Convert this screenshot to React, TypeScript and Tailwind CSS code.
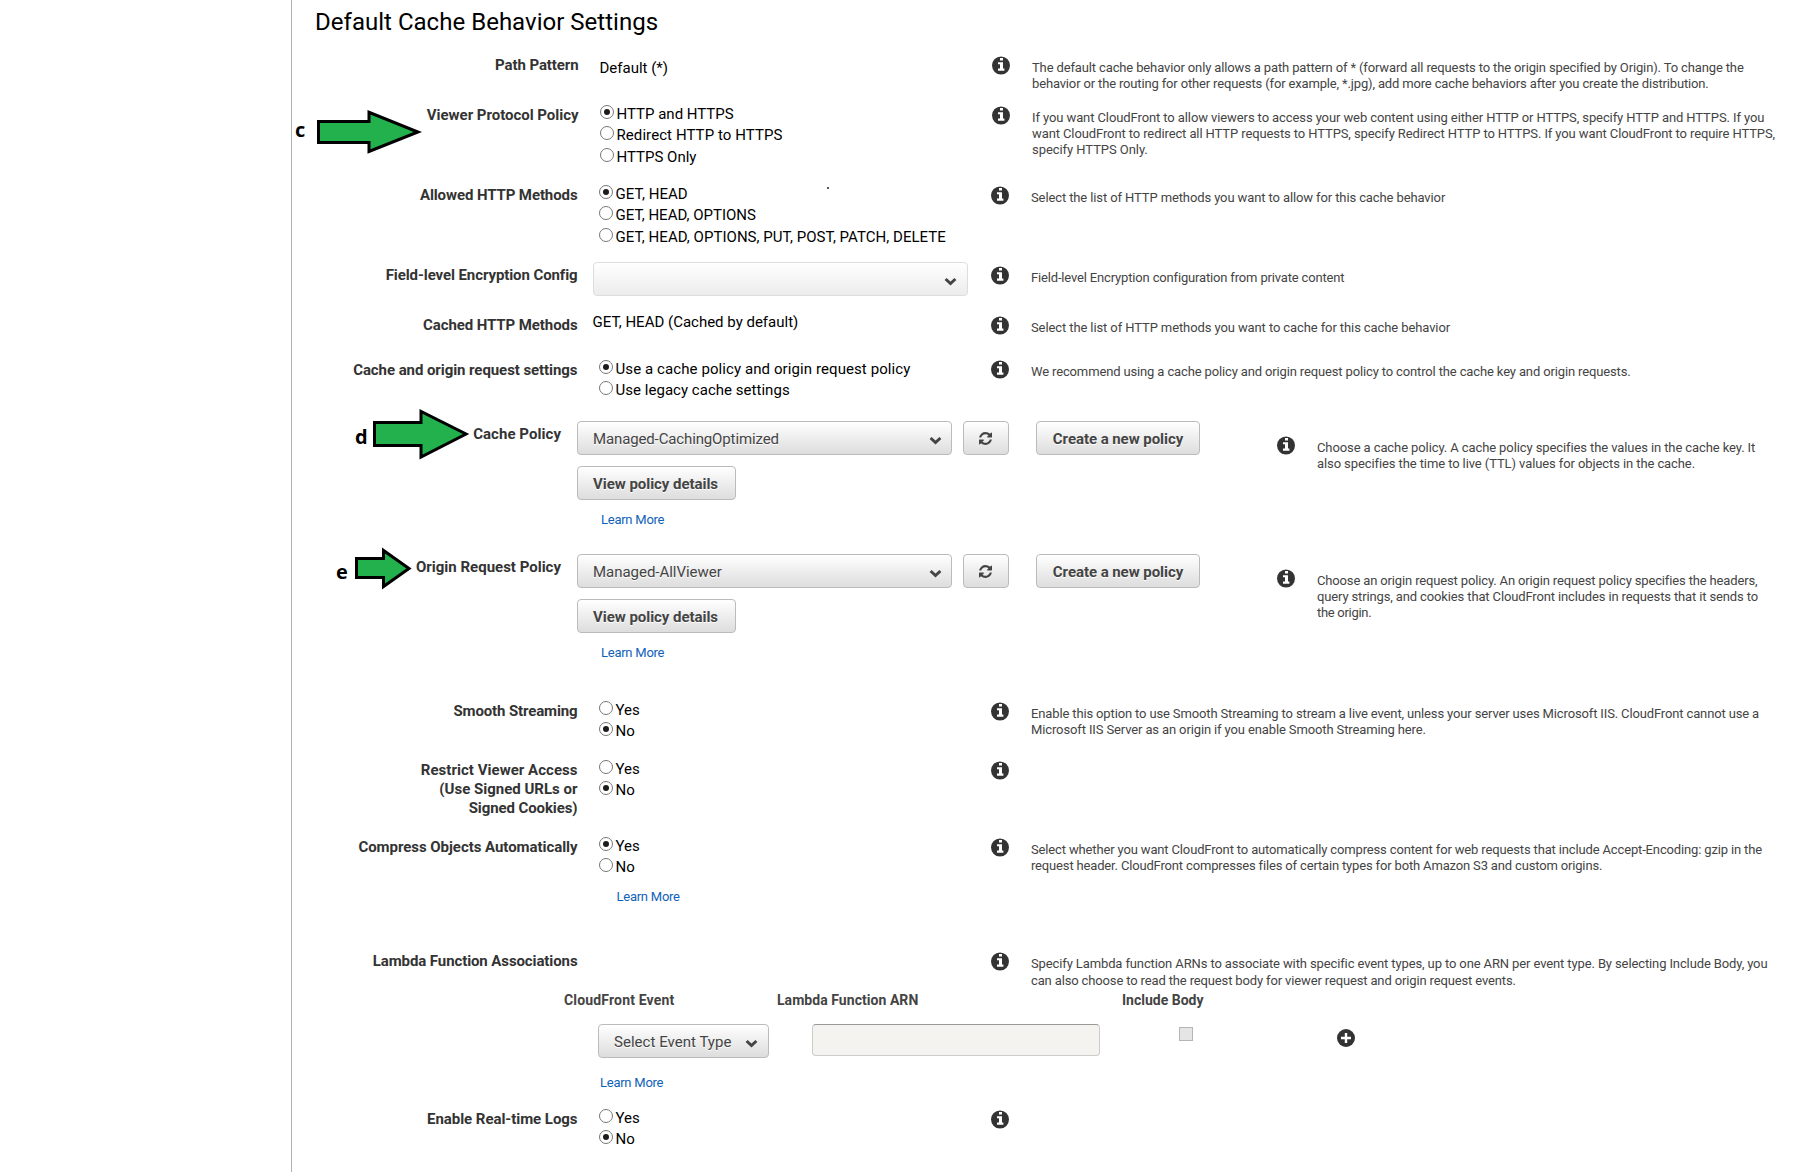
import React from "react";

type Line = { t: string; c: string };

function Info() {
  return (
    <svg className="block h-[19px] w-[18px]" viewBox="0 0 18 19">
      <ellipse cx="9" cy="9.5" rx="9" ry="9.1" fill="#333" />
      <path d="M8 2h3v2.6H8zM6 6.3h5v6.2h1.4v2.2H6v-2.2h2V8.3H6z" fill="#fff" />
    </svg>
  );
}

function Plus() {
  return (
    <svg className="block h-[18px] w-[18px]" viewBox="0 0 18 18">
      <circle cx="9" cy="9" r="9" fill="#333" />
      <path d="M4 9h10M9 4v10" stroke="#fff" strokeWidth="2.4" />
    </svg>
  );
}

function Chevron({ className = "" }: { className?: string }) {
  return (
    <svg className={"block h-[9px] w-[13px] shrink-0 " + className} viewBox="0 0 13 9">
      <path d="M1.6 2l4.9 4.5L11.4 2" fill="none" stroke="#444" strokeWidth="3" />
    </svg>
  );
}

function Refresh() {
  return (
    <svg className="mr-[2px] mb-[2px] block h-[13px] w-[13px]" viewBox="0 0 1536 1536" fill="#444">
      <path d="M1511 928q0 5-1 7-64 268-268 434.500t-478 166.500q-146 0-282.500-55t-243.500-157l-129 129q-19 19-45 19t-45-19-19-45v-448q0-26 19-45t45-19h448q26 0 45 19t19 45-19 45l-137 137q71 66 161 102t187 36q134 0 250-65t186-179q11-17 53-117 8-23 30-23h192q13 0 22.500 9.500t9.500 22.500zm25-800v448q0 26-19 45t-45 19h-448q-26 0-45-19t-19-45 19-45l138-138q-148-137-349-137-134 0-250 65t-186 179q-11 17-53 117-8 23-30 23h-199q-13 0-22.500-9.500t-9.500-22.500v-7q65-268 270-434.500t480-166.500q146 0 284 55.500t245 156.500l130-129q19-19 45-19t45 19 19 45z" />
    </svg>
  );
}

function Help({ lines, className = "leading-[16px]" }: { lines: Line[]; className?: string }) {
  return (
    <div className={"whitespace-nowrap text-[13px] text-[#444] " + className}>
      {lines.map((l) => (
        <div key={l.t} className={l.c}>{l.t}</div>
      ))}
    </div>
  );
}

function Row({
  label,
  height,
  shift = "",
  help = [],
  helpClass,
  infoClass = "",
  children,
}: {
  label: Line[];
  height: string;
  shift?: string;
  help?: Line[];
  helpClass?: string;
  infoClass?: string;
  children?: React.ReactNode;
}) {
  return (
    <div className={"flex " + height + " " + shift}>
      <div className="w-[285.500px] shrink-0 pt-px text-right text-[15px] leading-[19px] font-bold whitespace-nowrap text-[#333]">
        {label.map((l) => (
          <div key={l.t} className={l.c}>{l.t}</div>
        ))}
      </div>
      <div className="w-[413.500px] shrink-0">{children}</div>
      <div className={"flex " + infoClass}>
        <div className="w-[40px] shrink-0 pt-px"><Info /></div>
        <div className="pt-[5px]"><Help lines={help} className={helpClass} /></div>
      </div>
    </div>
  );
}

function Radios({ items, checked }: { items: Line[]; checked: number }) {
  return (
    <div className="-mt-px ml-[21.500px]">
      {items.map((l, i) => (
        <div key={l.t} className="flex h-[21.4px] items-start">
          <span className="mt-px flex h-[14px] w-[14px] items-center justify-center rounded-full border-[1.5px] border-[#777] bg-white">
            {i === checked && <span className="h-[6px] w-[6px] rounded-full bg-[#1c1c1c]" />}
          </span>
          <span className={"mt-px ml-[2.500px] text-[15px] leading-[19px] whitespace-nowrap " + l.c}>{l.t}</span>
        </div>
      ))}
    </div>
  );
}

const face =
  "flex h-[34px] items-center rounded-[4px] border border-[#bbb] bg-linear-to-b from-white to-[#ddd] pt-[2px] text-[15px] text-[#444] [text-shadow:0_1px_0_#fff] whitespace-nowrap ";

function PolicyRow({
  label,
  value,
  valueClass,
  height,
  help,
}: {
  label: Line;
  value: string;
  valueClass: string;
  height: string;
  help: Line[];
}) {
  return (
    <div className={"flex " + height}>
      <div className="w-[269px] shrink-0 pt-px text-right text-[15px] leading-[19px] font-bold whitespace-nowrap text-[#333]">
        <div className={label.c}>{label.t}</div>
      </div>
      <div className="-mt-[3px] ml-4 w-[700px] shrink-0">
        <div className="flex">
          <div className={face + "w-[375px] justify-between pr-[9.500px] pl-[15px]"}>
            <span className={valueClass}>{value}</span>
            <Chevron className="mt-[2px]" />
          </div>
          <div className={face + "ml-[11px] w-[46px] justify-center"}><Refresh /></div>
          <div className={face + "ml-[27px] w-[164px] justify-center font-bold tracking-[-0.06px]"}>Create a new policy</div>
        </div>
        <div className={face + "mt-[11px] w-[159px] pl-[15px] font-bold tracking-[-0.044px]"}>View policy details</div>
        <LearnMore className="mt-[12px] ml-[24px]" />
      </div>
      <div className="w-[40px] shrink-0 pt-[12px]"><Info /></div>
      <div className="pt-[16px]"><Help lines={help} /></div>
    </div>
  );
}

function LearnMore({ className = "" }: { className?: string }) {
  return <div className={"text-[13px] leading-4 tracking-[-0.25px] text-[#0f62b9] " + className}>Learn More</div>;
}

function Arrow({ letter, points, letterClass, className, w, h }: { letter: string; points: string; letterClass: string; className: string; w: number; h: number }) {
  return (
    <div className={"absolute flex " + className}>
      <span className={"font-['Open_Sans',sans-serif] text-[20px] leading-[28px] font-bold text-black " + letterClass}>{letter}</span>
      <svg width={w} height={h} viewBox={"0 0 " + w + " " + h} className="block shrink-0">
        <polygon points={points} fill="#22b14c" stroke="#000" strokeWidth="3" />
      </svg>
    </div>
  );
}

export default function App() {
  return (
    <div className="relative h-[1172px] w-[1800px] overflow-hidden bg-white font-[Roboto,sans-serif] text-black">
      <div className="ml-[291px] h-full border-l border-[#b0b0b0]">
        <h1 className="h-[55px] pt-[8px] pl-[23px] text-[24px] leading-[28px] tracking-[0.02px]">Default Cache Behavior Settings</h1>

        <Row
          label={[{ t: "Path Pattern", c: "tracking-[-0.1px]" }]}
          height="h-[50px]"
          shift="pl-px"
          help={[
            { t: "The default cache behavior only allows a path pattern of * (forward all requests to the origin specified by Origin). To change the", c: "tracking-[-0.135px]" },
            { t: "behavior or the routing for other requests (for example, *.jpg), add more cache behaviors after you create the distribution.", c: "tracking-[-0.153px]" },
          ]}
        >
          <div className="pt-[4px] pl-[21px] text-[15px] leading-[19px]">Default (*)</div>
        </Row>

        <Row
          label={[{ t: "Viewer Protocol Policy", c: "tracking-[-0.026px]" }]}
          height="h-[80px]"
          shift="pl-px"
          help={[
            { t: "If you want CloudFront to allow viewers to access your web content using either HTTP or HTTPS, specify HTTP and HTTPS. If you", c: "tracking-[-0.096px]" },
            { t: "want CloudFront to redirect all HTTP requests to HTTPS, specify Redirect HTTP to HTTPS. If you want CloudFront to require HTTPS,", c: "tracking-[-0.104px]" },
            { t: "specify HTTPS Only.", c: "tracking-[-0.058px]" },
          ]}
        >
          <Radios
            checked={0}
            items={[
              { t: "HTTP and HTTPS", c: "" },
              { t: "Redirect HTTP to HTTPS", c: "tracking-[0.08px]" },
              { t: "HTTPS Only", c: "" },
            ]}
          />
        </Row>

        <Row
          label={[{ t: "Allowed HTTP Methods", c: "tracking-[-0.1px]" }]}
          height="h-[80px]"
          help={[{ t: "Select the list of HTTP methods you want to allow for this cache behavior", c: "tracking-[-0.11px]" }]}
        >
          <Radios
            checked={0}
            items={[
              { t: "GET, HEAD", c: "tracking-[0.05px]" },
              { t: "GET, HEAD, OPTIONS", c: "" },
              { t: "GET, HEAD, OPTIONS, PUT, POST, PATCH, DELETE", c: "tracking-[0.035px]" },
            ]}
          />
        </Row>

        <Row
          label={[{ t: "Field-level Encryption Config", c: "tracking-[-0.09px]" }]}
          height="h-[50px]"
          help={[{ t: "Field-level Encryption configuration from private content", c: "tracking-[-0.162px]" }]}
        >
          <div className="-mt-[3px] ml-[15px] flex h-[34px] w-[375px] items-center justify-end rounded-[4px] border border-[#ddd] bg-linear-to-b from-white to-[#ececec] pr-[9.500px]">
            <Chevron className="mt-[4px]" />
          </div>
        </Row>

        <Row
          label={[{ t: "Cached HTTP Methods", c: "tracking-[-0.09px]" }]}
          height="h-[45px]"
          help={[{ t: "Select the list of HTTP methods you want to cache for this cache behavior", c: "tracking-[-0.101px]" }]}
        >
          <div className="-mt-[2px] pl-[15px] text-[15px] leading-[19px]">GET, HEAD (Cached by default)</div>
        </Row>

        <Row
          label={[{ t: "Cache and origin request settings", c: "tracking-[-0.07px]" }]}
          height="h-[64px]"
          infoClass="-mt-px"
          help={[{ t: "We recommend using a cache policy and origin request policy to control the cache key and origin requests.", c: "tracking-[-0.140px]" }]}
        >
          <Radios
            checked={0}
            items={[
              { t: "Use a cache policy and origin request policy", c: "tracking-[0.09px]" },
              { t: "Use legacy cache settings", c: "tracking-[0.03px]" },
            ]}
          />
        </Row>

        <PolicyRow
          label={{ t: "Cache Policy", c: "tracking-[0.05px]" }}
          value="Managed-CachingOptimized"
          valueClass="tracking-[-0.13px]"
          height="h-[133px]"
          help={[
            { t: "Choose a cache policy. A cache policy specifies the values in the cache key. It", c: "tracking-[-0.098px]" },
            { t: "also specifies the time to live (TTL) values for objects in the cache.", c: "tracking-[-0.095px]" },
          ]}
        />
        <PolicyRow
          label={{ t: "Origin Request Policy", c: "" }}
          value="Managed-AllViewer"
          valueClass="tracking-[-0.03px]"
          height="h-[144px]"
          help={[
            { t: "Choose an origin request policy. An origin request policy specifies the headers,", c: "tracking-[-0.145px]" },
            { t: "query strings, and cookies that CloudFront includes in requests that it sends to", c: "tracking-[-0.133px]" },
            { t: "the origin.", c: "tracking-[-0.3px]" },
          ]}
        />

        <Row
          label={[{ t: "Smooth Streaming", c: "tracking-[-0.13px]" }]}
          height="h-[59px]"
          help={[
            { t: "Enable this option to use Smooth Streaming to stream a live event, unless your server uses Microsoft IIS. CloudFront cannot use a", c: "tracking-[-0.137px]" },
            { t: "Microsoft IIS Server as an origin if you enable Smooth Streaming here.", c: "tracking-[-0.125px]" },
          ]}
        >
          <Radios checked={1} items={[{ t: "Yes", c: "" }, { t: "No", c: "" }]} />
        </Row>

        <Row
          label={[
            { t: "Restrict Viewer Access", c: "tracking-[0.03px]" },
            { t: "(Use Signed URLs or", c: "" },
            { t: "Signed Cookies)", c: "tracking-[-0.1px]" },
          ]}
          height="h-[77px]"
        >
          <Radios checked={1} items={[{ t: "Yes", c: "" }, { t: "No", c: "" }]} />
        </Row>

        <Row
          label={[{ t: "Compress Objects Automatically", c: "tracking-[-0.05px]" }]}
          height="h-[114px]"
          help={[
            { t: "Select whether you want CloudFront to automatically compress content for web requests that include Accept-Encoding: gzip in the", c: "tracking-[-0.147px]" },
            { t: "request header. CloudFront compresses files of certain types for both Amazon S3 and custom origins.", c: "tracking-[-0.160px]" },
          ]}
        >
          <Radios checked={0} items={[{ t: "Yes", c: "" }, { t: "No", c: "" }]} />
          <LearnMore className="mt-[10px] ml-[39px]" />
        </Row>

        <Row
          label={[{ t: "Lambda Function Associations", c: "tracking-[-0.1px]" }]}
          height="h-[40px]"
          helpClass="leading-[16.500px]"
          help={[
            { t: "Specify Lambda function ARNs to associate with specific event types, up to one ARN per event type. By selecting Include Body, you", c: "tracking-[-0.117px]" },
            { t: "can also choose to read the request body for viewer request and origin request events.", c: "tracking-[-0.140px]" },
          ]}
        />

        <div className="flex h-[33px] text-[14px] leading-[18px] font-bold whitespace-nowrap text-[#444]">
          <div className="ml-[272px] w-[213px] shrink-0 tracking-[0.17px]">CloudFront Event</div>
          <div className="w-[345px] shrink-0 tracking-[0.05px]">Lambda Function ARN</div>
          <div>Include Body</div>
        </div>
        <div className="flex h-[51px] items-start">
          <div className={face + "ml-[306px] w-[171px] justify-between pr-[10px] pl-[15px]"}>
            <span className="tracking-[0.03px]">Select Event Type</span>
            <Chevron className="mt-[2px]" />
          </div>
          <div className="ml-[43px] h-[32px] w-[288px] rounded-[4px] border border-[#ccc] border-t-[#999] bg-[#f4f3ef]" />
          <div className="mt-[3px] ml-[79px] h-[14px] w-[14px] border border-[#b5b5b5] bg-[#e5e5e5]" />
          <div className="mt-[4.500px] ml-[144px]"><Plus /></div>
        </div>
        <LearnMore className="ml-[308px] h-[34px]" />

        <Row label={[{ t: "Enable Real-time Logs", c: "tracking-[-0.05px]" }]} height="h-[63px]">
          <Radios checked={1} items={[{ t: "Yes", c: "" }, { t: "No", c: "" }]} />
        </Row>
      </div>

      <Arrow letter="c" className="top-[109px] left-[295px]" letterClass="mt-[7px] w-[22px]" w={106} h={46} points="1.5,12.5 52,12.5 52,3.300 101,23 52,42.500 52,33.500 1.500,33.500" />
      <Arrow letter="d" className="top-[408px] left-[355px]" letterClass="mt-[15px] w-[18px]" w={98} h={52} points="1.5,14.5 48,14.500 48,3.500 93,26 48,49 48,37.500 1.500,37.500" />
      <Arrow letter="e" className="top-[547px] left-[336px]" letterClass="mt-[11px] w-[19px]" w={60} h={44} points="1.5,11.5 28.500,11.5 28.500,3.500 54,21.500 28.500,39.500 28.500,30.500 1.500,30.500" />
      <span className="absolute top-[187px] left-[827px] h-[2px] w-[2px] bg-[#555]" />
    </div>
  );
}
